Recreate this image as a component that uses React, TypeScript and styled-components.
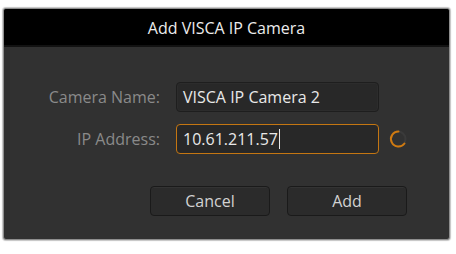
import React from "react";
import styled, { createGlobalStyle } from "styled-components";

const Global = createGlobalStyle`
  html, body { margin: 0; padding: 0; background: #ffffff; }
  body { font-family: "Open Sans", "Noto Sans", sans-serif; }
`;

const Page = styled.div`
  width: 456px;
  height: 254px;
  padding: 8px 0 0 3px;
  box-sizing: border-box;
`;

const Dialog = styled.div`
  width: 447px;
  height: 232px;
  box-sizing: border-box;
  background: #313131;
  border: 1px solid #8e8e8e;
  border-radius: 3px;
  box-shadow: 0 0 1px 1px #c4c4c4;
  overflow: hidden;
  display: flex;
  flex-direction: column;
`;

const Header = styled.div`
  height: 34px;
  background: #000000;
  border-bottom: 2px solid #121212;
  display: flex;
  align-items: center;
  justify-content: center;
  color: #ececec;
  font-size: 16px;
  padding-top: 2px;
`;

const Form = styled.div`
  display: grid;
  grid-template-columns: 156px 203px 28px;
  column-gap: 16px;
  row-gap: 12px;
  padding-top: 35px;
  align-items: center;
`;

const Label = styled.div`
  text-align: right;
  color: #8a8a8a;
  font-size: 16px;
`;

const Field = styled.div<{ $focused?: boolean }>`
  height: 30px;
  box-sizing: border-box;
  border: 1px solid ${(p) => (p.$focused ? "#c47612" : "#1e1e1e")};
  border-radius: 4px;
  background: #282828;
  box-shadow: ${(p) => (p.$focused ? "none" : "inset 0 0 0 1px #2c2c2c")};
  color: #e8e8e8;
  font-size: 16px;
  display: flex;
  align-items: center;
  padding-left: 6px;
`;

const Caret = styled.span`
  display: inline-block;
  width: 1px;
  height: 20px;
  background: #e8e8e8;
  margin-left: 1px;
`;

const Spinner = styled.svg`
  width: 20px;
  height: 20px;
  margin-left: -7px;
  display: block;
`;

const Buttons = styled.div`
  display: flex;
  gap: 17px;
  padding: 32px 0 0 146px;
`;

const Button = styled.button`
  width: 120px;
  height: 30px;
  box-sizing: border-box;
  background: #2b2b2b;
  border: 1px solid #1a1a1a;
  border-radius: 4px;
  box-shadow: inset 0 1px 0 #333333;
  color: #d2d2d2;
  font-family: "Open Sans", "Noto Sans", sans-serif;
  font-size: 16px;
  padding: 0;
`;

export default function App() {
  return (
    <>
      <Global />
      <Page>
        <Dialog>
          <Header>Add VISCA IP Camera</Header>
          <Form>
            <Label>Camera Name:</Label>
            <Field>VISCA IP Camera 2</Field>
            <span />
            <Label>IP Address:</Label>
            <Field $focused>
              10.61.211.57
              <Caret />
            </Field>
            <Spinner viewBox="0 0 20 20">
              <circle cx="10" cy="10" r="7.5" fill="none" stroke="#3a3a3a" strokeWidth="2" />
              <path
                d="M10.5 2.5 A7.5 7.5 0 1 0 16.5 14.5"
                fill="none"
                stroke="#d07a10"
                strokeWidth="2"
                strokeLinecap="round"
              />
            </Spinner>
          </Form>
          <Buttons>
            <Button>Cancel</Button>
            <Button>Add</Button>
          </Buttons>
        </Dialog>
      </Page>
    </>
  );
}
